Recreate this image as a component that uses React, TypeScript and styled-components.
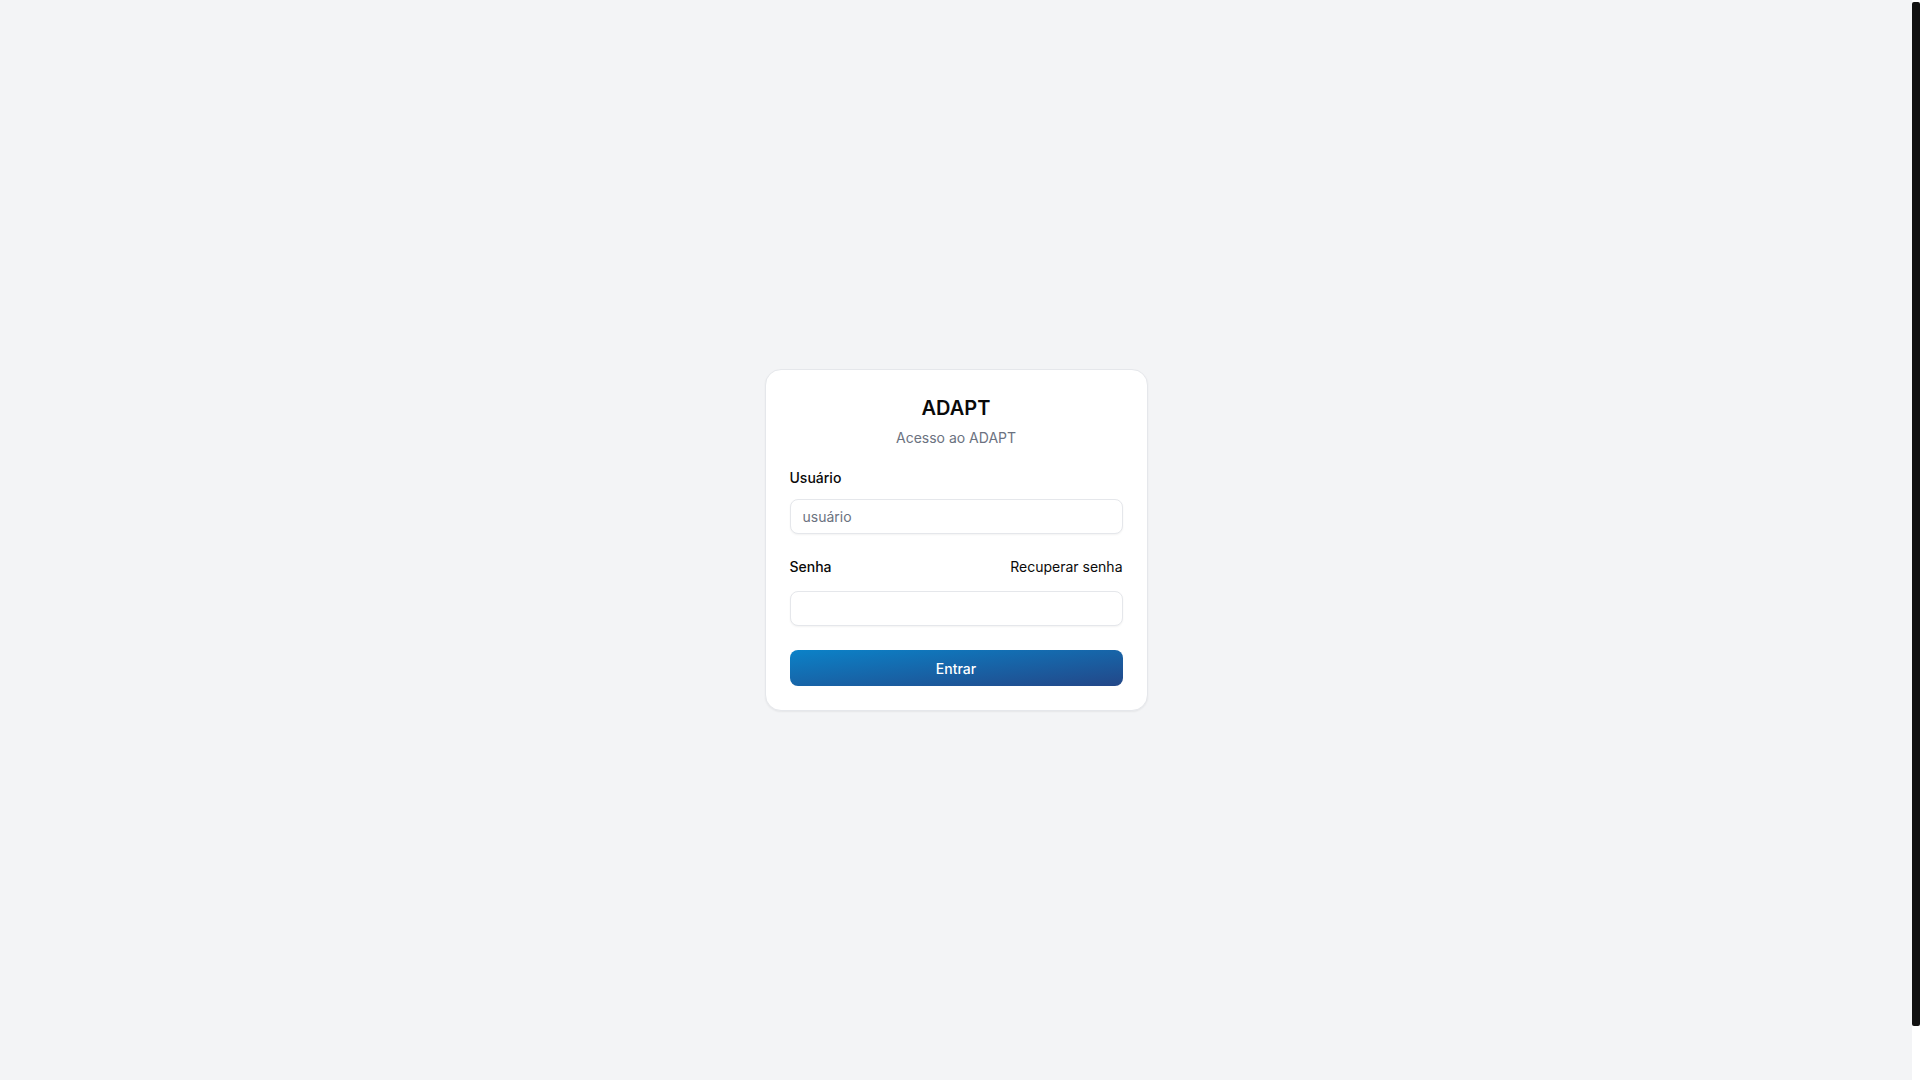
import React from "react";
import styled, { createGlobalStyle } from "styled-components";

const GlobalStyle = createGlobalStyle`
  html, body {
    margin: 0;
    padding: 0;
    background: #f3f4f6;
    font-family: Inter, "Noto Sans", "Liberation Sans", sans-serif;
    color: #111827;
    overflow: hidden;
  }
  * { box-sizing: border-box; }
`;

const Page = styled.main`
  min-height: 100vh;
  padding-right: 8px;
  display: flex;
  align-items: center;
  justify-content: center;
`;

const ScrollTrack = styled.div`
  position: fixed;
  top: 0;
  right: 0;
  width: 8px;
  height: 100vh;
  background: #ffffff;
  padding-top: 2px;
`;

const ScrollThumb = styled.div`
  width: 8px;
  height: 1024px;
  background: #111111;
  border-radius: 2px;
`;

const Card = styled.section`
  width: 383px;
  background: #ffffff;
  border: 1px solid #e5e7eb;
  border-radius: 16px;
  box-shadow: 0 1px 2px rgba(0, 0, 0, 0.06);
  padding: 24px;
  display: flex;
  flex-direction: column;
`;

const Header = styled.header`
  display: flex;
  flex-direction: column;
  align-items: center;
  gap: 6px;
  margin-bottom: 20px;
`;

const Title = styled.h1`
  margin: 0;
  font-size: 20px;
  line-height: 28px;
  font-weight: 600;
  color: #0a0a0a;
`;

const Subtitle = styled.p`
  margin: 0;
  font-size: 14px;
  line-height: 20px;
  color: #6b7280;
`;

const Form = styled.form`
  display: flex;
  flex-direction: column;
  gap: 20px;
`;

const Field = styled.div`
  display: flex;
  flex-direction: column;
  gap: 11px;
`;

const LabelRow = styled.div`
  height: 26px;
  display: flex;
  align-items: center;
  justify-content: space-between;
`;

const Label = styled.label`
  font-size: 14px;
  line-height: 20px;
  font-weight: 500;
  color: #0a0a0a;
`;

const LinkButton = styled.a`
  font-size: 14px;
  line-height: 20px;
  color: #0a0a0a;
  text-decoration: none;
  cursor: pointer;
`;

const Input = styled.input`
  width: 100%;
  height: 35px;
  border: 1px solid #e5e7eb;
  border-radius: 8px;
  background: #ffffff;
  box-shadow: 0 1px 2px rgba(0, 0, 0, 0.05);
  padding: 0 12px;
  font-family: inherit;
  font-size: 14px;
  color: #111827;
  outline: none;
  &::placeholder { color: #6b7280; }
`;

const Submit = styled.button`
  margin-top: 4px;
  height: 36px;
  width: 100%;
  border: none;
  border-radius: 8px;
  background: linear-gradient(to bottom right, #0b82c8, #234788);
  color: #ffffff;
  font-family: inherit;
  font-size: 14px;
  font-weight: 500;
  cursor: pointer;
`;

export default function App() {
  return (
    <>
      <GlobalStyle />
      <Page>
        <Card>
          <Header>
            <Title>ADAPT</Title>
            <Subtitle>Acesso ao ADAPT</Subtitle>
          </Header>
          <Form onSubmit={(e) => e.preventDefault()}>
            <Field>
              <Label htmlFor="user">Usuário</Label>
              <Input id="user" placeholder="usuário" />
            </Field>
            <Field>
              <LabelRow>
                <Label htmlFor="pass">Senha</Label>
                <LinkButton>Recuperar senha</LinkButton>
              </LabelRow>
              <Input id="pass" type="password" />
            </Field>
            <Submit type="submit">Entrar</Submit>
          </Form>
        </Card>
      </Page>
      <ScrollTrack aria-hidden="true">
        <ScrollThumb />
      </ScrollTrack>
    </>
  );
}
